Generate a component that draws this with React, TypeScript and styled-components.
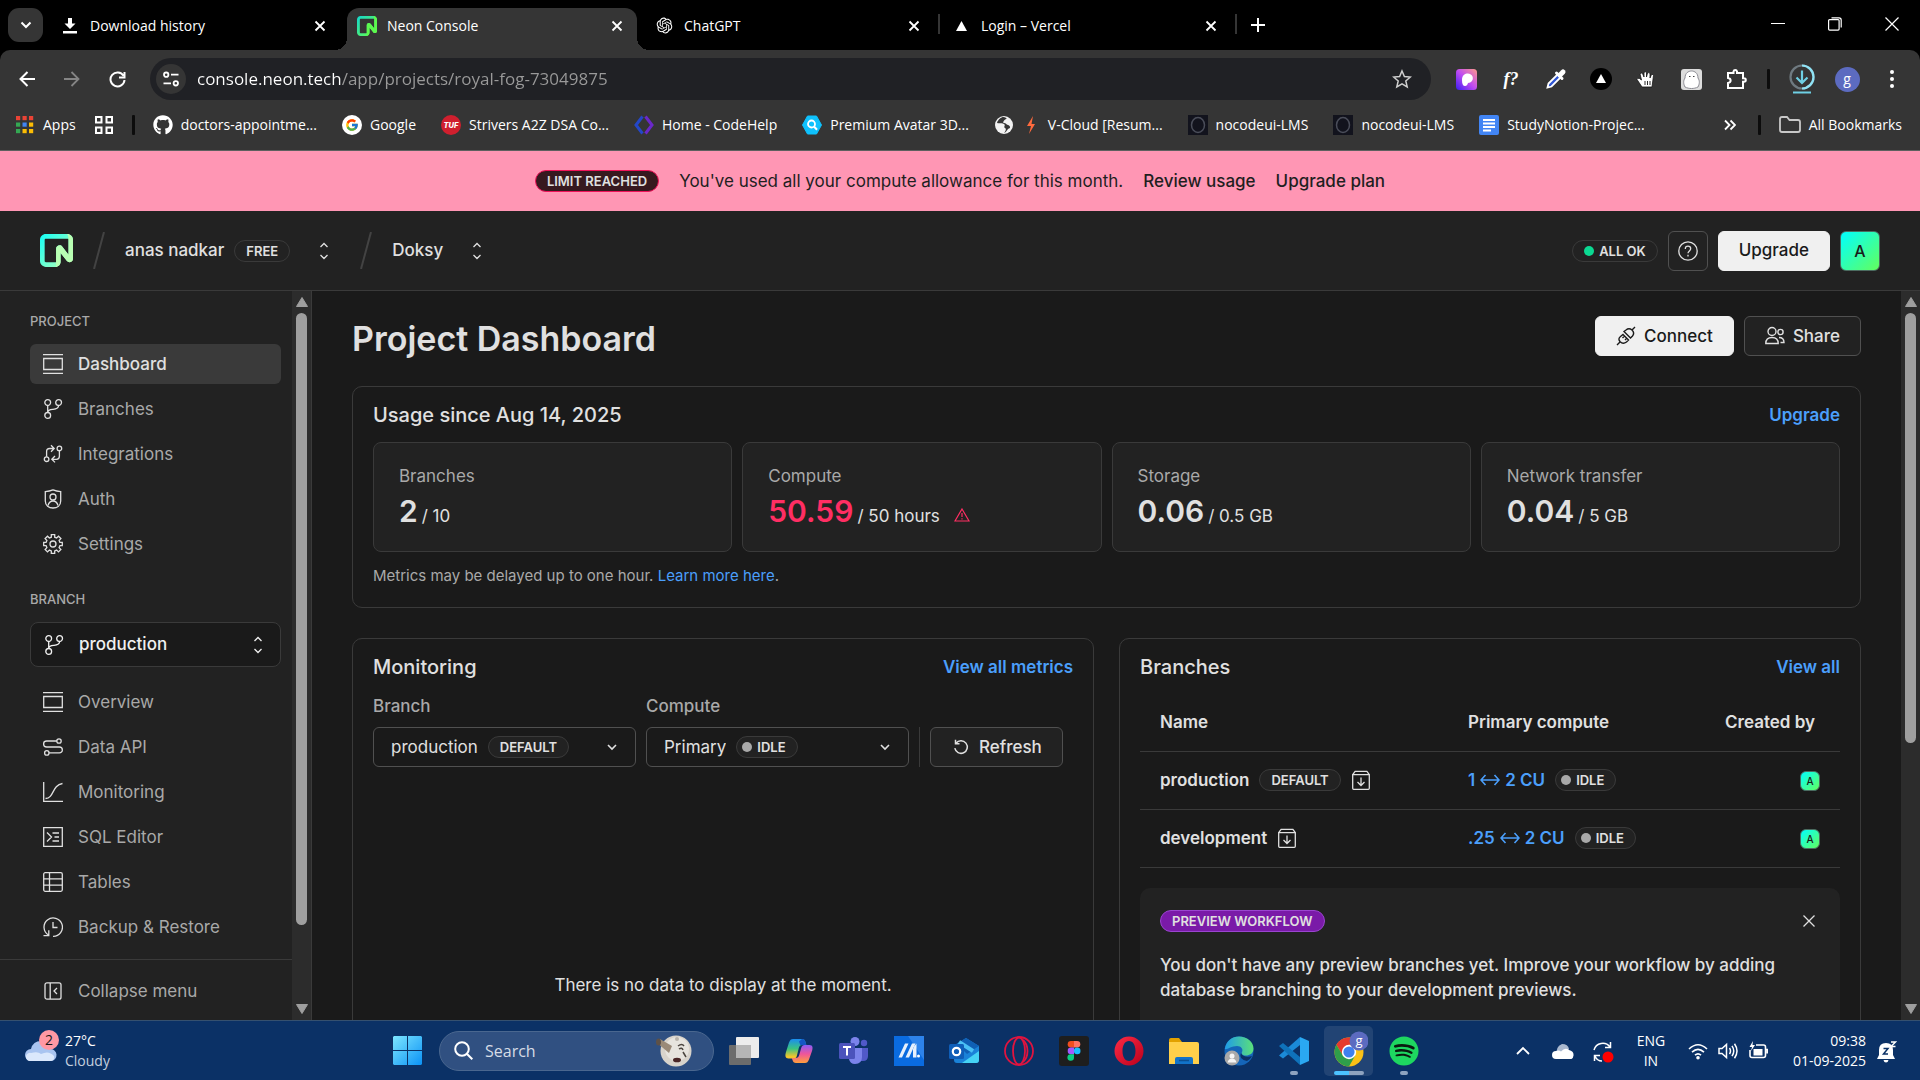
import React, { ReactNode } from "react";
import styled, { createGlobalStyle, css } from "styled-components";
import { FaGithub, FaSpotify } from "react-icons/fa";
import { FcGoogle } from "react-icons/fc";
import { RiOpenaiFill } from "react-icons/ri";

const ui = `"Open Sans", "Noto Sans", sans-serif`;
const c = {
  frame: "#353535",
  panel: "#222222",
  page: "#1a1a1a",
  line: "#3a3a3a",
  lineStrong: "#505050",
  text: "#e0e0e0",
  muted: "#a9a9a9",
  link: "#4b9ffb",
  danger: "#ff2e63",
};

const Global = createGlobalStyle`
  *, *::before, *::after { box-sizing: border-box; }
  body { margin: 0; background: #000; color: ${c.text}; font-family: Inter, sans-serif; font-size: 17px; line-height: 25px; overflow: hidden; }
  button, input, select { font: inherit; color: inherit; background: none; border: 0; padding: 0; margin: 0; }
  button { cursor: pointer; }
  a { color: inherit; text-decoration: none; }
  svg { display: block; flex: none; }
  h1, h2, p, ul { margin: 0; padding: 0; }
  ul { list-style: none; }
`;

const Screen = styled.div`
  height: 100vh;
  display: flex;
  flex-direction: column;
`;
const Spacer = styled.div`flex: 1;`;

/* ---------- Browser frame ---------- */

const TabStrip = styled.div`
  height: 50px;
  flex: none;
  display: flex;
  background: #000;
  font: 14px/20px ${ui};
  color: #fff;
`;
const TabSearch = styled.button`
  width: 35px;
  height: 34px;
  margin: 8px 7px 0 8px;
  border-radius: 11px;
  background: ${c.frame};
  display: grid;
  place-items: center;
`;
const Tab = styled.div<{ $active?: boolean; $divider?: boolean }>`
  position: relative;
  flex: 0 1 290px;
  margin: 8px 7px 0 0;
  padding: 0 10px 7px;
  display: flex;
  align-items: center;
  gap: 10px;
  border-radius: 12px 12px 0 0;
  background: ${(p) => (p.$active ? c.frame : "transparent")};
  ${(p) =>
    p.$active &&
    css`
      &::before,
      &::after {
        content: "";
        position: absolute;
        bottom: 0;
        width: 12px;
        height: 12px;
      }
      &::before {
        left: -12px;
        background: radial-gradient(circle at 0 0, transparent 12px, ${c.frame} 12px);
      }
      &::after {
        right: -12px;
        background: radial-gradient(circle at 100% 0, transparent 12px, ${c.frame} 12px);
      }
    `}
  ${(p) =>
    p.$divider &&
    css`
      &::after {
        content: "";
        position: absolute;
        right: -6px;
        top: 6px;
        width: 2px;
        height: 20px;
        background: ${c.frame};
      }
    `}
`;
const TabIcon = styled.span`
  width: 20px;
  display: grid;
  place-items: center;
`;
const TabTitle = styled.span`
  flex: 1;
  white-space: nowrap;
`;
const IconButton = styled.button<{ $size?: number }>`
  width: ${(p) => p.$size ?? 20}px;
  height: ${(p) => p.$size ?? 20}px;
  flex: none;
  display: grid;
  place-items: center;
`;
const NewTab = styled(IconButton)`margin: 15px 0 0 10px;`;
const WindowControls = styled.div`
  display: flex;
  padding: 0 0 2px;
`;
const WindowButton = styled.button`
  width: 57px;
  display: grid;
  place-items: center;
`;

const Toolbar = styled.div`
  height: 58px;
  flex: none;
  display: flex;
  align-items: center;
  padding: 0 13px 0 12px;
  background: ${c.frame};
  border-radius: 10px 10px 0 0;
  color: #fff;
`;
const NavButtons = styled.div`
  display: flex;
  gap: 15px;
  margin-right: 18px;
`;
const AddressBar = styled.div`
  flex: 1;
  height: 42px;
  border-radius: 21px;
  background: #202125;
  display: flex;
  align-items: center;
  gap: 11px;
  padding: 0 14px 0 6px;
`;
const SiteInfo = styled.button`
  width: 30px;
  height: 30px;
  border-radius: 50%;
  background: ${c.frame};
  display: grid;
  place-items: center;
`;
const Address = styled.input`
  flex: 1;
  min-width: 0;
  outline: 0;
  font: 17px/24px ${ui};
  -webkit-text-fill-color: transparent;
  background: linear-gradient(90deg, #fff 144px, #9a9a9a 144px);
  -webkit-background-clip: text;
  background-clip: text;
`;
const BarDivider = styled.span`
  width: 3px;
  height: 20px;
  border-radius: 1px;
  background: #0c0c0c;
  flex: none;
`;
const Extensions = styled.div`
  display: flex;
  align-items: center;
  gap: 15px;
  margin-left: 20px;
  ${BarDivider} { margin: 0 2px 0 1px; }
`;
const FnLabel = styled.span`font: italic 700 18px/20px "Liberation Serif", serif;`;
const ProfileDot = styled.span`
  width: 25px;
  height: 25px;
  border-radius: 50%;
  background: #5c6bc0;
  display: grid;
  place-items: center;
  font: 14px/14px ${ui};
  color: #fff;
`;

const Bookmarks = styled.nav`
  height: 43px;
  flex: none;
  display: flex;
  align-items: center;
  gap: 18px;
  padding: 0 18px 8px 15px;
  background: ${c.frame};
  border-bottom: 1px solid #5f5f5f;
  font: 14px/20px ${ui};
  color: #fff;
  white-space: nowrap;
`;
const BookmarkList = styled.div`
  display: flex;
  align-items: center;
  gap: 25px;
`;
const Bookmark = styled.a`
  display: flex;
  align-items: center;
  gap: 8px;
`;

/* ---------- Console ---------- */

const Banner = styled.div`
  height: 60px;
  flex: none;
  display: flex;
  align-items: center;
  justify-content: center;
  gap: 20px;
  background: #ff96b4;
  color: #1f1f1f;
`;
const StrongLink = styled.a`font-weight: 500;`;

type Tone = "plain" | "limit" | "preview";
const tones = {
  plain: css`background: #222; border-color: ${c.line};`,
  limit: css`background: #37191f; border-color: #f0125a;`,
  preview: css`background: #7a1aa8; border-color: #9a45d0;`,
};
const Pill = styled.span<{ $tone?: Tone }>`
  height: 22px;
  display: inline-flex;
  align-items: center;
  gap: 5px;
  flex: none;
  padding: 0 11px;
  border: 1px solid;
  border-radius: 11px;
  font-size: 13px;
  line-height: 20px;
  font-weight: 600;
  color: ${c.text};
  ${(p) => tones[p.$tone ?? "plain"]}
`;
const StatusPill = styled(Pill)`padding: 0 11px 0 5px;`;
const Dot = styled.i<{ $ok?: boolean }>`
  width: 10px;
  height: 10px;
  border-radius: 50%;
  background: ${(p) => (p.$ok ? "#0bd992" : "#a9a9a9")};
`;

const Header = styled.header`
  height: 80px;
  flex: none;
  display: flex;
  align-items: center;
  padding: 0 40px;
  background: ${c.panel};
  border-bottom: 1px solid ${c.line};
  font-weight: 500;
`;
const Crumb = styled.div`
  display: flex;
  align-items: center;
  gap: 10px;
  margin-right: 24px;
`;
const Switcher = styled(IconButton)`margin-right: 6px;`;
const HeaderSlash = styled.svg`margin: 0 20px;`;
const HeaderActions = styled.div`
  display: flex;
  align-items: center;
  gap: 10px;
`;
const Button = styled.button<{ $primary?: boolean; $icon?: boolean }>`
  height: 40px;
  ${(p) => (p.$icon ? "width: 40px; padding: 0;" : "padding: 0 20px;")}
  display: flex;
  align-items: center;
  justify-content: center;
  gap: 8px;
  flex: none;
  border-radius: 6px;
  font-weight: 500;
  border: 1px solid ${(p) => (p.$primary ? "#f0f0f0" : c.lineStrong)};
  background: ${(p) => (p.$primary ? "#f0f0f0" : c.panel)};
  color: ${(p) => (p.$primary ? "#1a1a1a" : c.text)};
`;
const Avatar = styled.span<{ $large?: boolean }>`
  width: ${(p) => (p.$large ? 40 : 20)}px;
  height: ${(p) => (p.$large ? 40 : 20)}px;
  border-radius: 6px;
  border: 1px solid #4b6b60;
  background: linear-gradient(135deg, #00ffff, #63ff5c);
  display: inline-grid;
  place-items: center;
  color: #1a1a1a;
  font-weight: 500;
  font-size: ${(p) => (p.$large ? 16 : 10)}px;
  line-height: 18px;
  vertical-align: middle;
`;

const Workspace = styled.div`
  flex: 1;
  min-height: 0;
  display: flex;
  background: ${c.page};
`;
const Sidebar = styled.aside`
  width: 312px;
  flex: none;
  display: flex;
  background: ${c.panel};
  border-right: 1px solid ${c.line};
`;
const SidebarBody = styled.div`
  flex: 1;
  display: flex;
  flex-direction: column;
`;
const Nav = styled.nav`
  flex: 1;
  padding: 20px 11px 0 30px;
`;
const NavHeading = styled.div`
  font-size: 13px;
  line-height: 20px;
  font-weight: 500;
  color: ${c.muted};
  margin-bottom: 13px;
`;
const NavList = styled.ul`
  display: flex;
  flex-direction: column;
  gap: 5px;
  margin-bottom: 25px;
  &:last-child { margin-bottom: 12px; }
`;
const NavLink = styled.a<{ $active?: boolean }>`
  height: 40px;
  display: flex;
  align-items: center;
  gap: 15px;
  padding-left: 13px;
  border-radius: 6px;
  background: ${(p) => (p.$active ? c.line : "transparent")};
  color: ${(p) => (p.$active ? c.text : c.muted)};
  font-weight: ${(p) => (p.$active ? 500 : 400)};
  svg { color: ${c.text}; }
`;
const BranchSelect = styled.label`
  height: 45px;
  display: flex;
  align-items: center;
  gap: 15px;
  padding: 0 17px 0 13px;
  margin-bottom: 15px;
  border: 1px solid ${c.line};
  border-radius: 8px;
  background: ${c.page};
  font-weight: 500;
  color: #f0f0f0;
`;
const Select = styled.select<{ $grow?: boolean }>`
  appearance: none;
  outline: 0;
  field-sizing: content;
  line-height: 25px;
  flex: ${(p) => (p.$grow ? 1 : "none")};
`;
const SidebarFoot = styled.div`
  height: 61px;
  flex: none;
  padding: 11px 11px 0 30px;
  border-top: 1px solid ${c.line};
`;

const Track = styled.div`
  width: 19px;
  flex: none;
  display: flex;
  flex-direction: column;
  align-items: center;
  background: #2c2c2c;
`;
const TrackArrow = styled.span<{ $down?: boolean }>`
  height: 22px;
  display: grid;
  place-items: center;
  transform: ${(p) => (p.$down ? "rotate(180deg)" : "none")};
`;
const Thumb = styled.div`
  width: 11px;
  border-radius: 6px;
  background: #9f9f9f;
`;

const Main = styled.main`
  flex: 1;
  min-width: 0;
  overflow: hidden;
  padding: 25px 40px 0;
`;
const TitleRow = styled.div`
  height: 40px;
  display: flex;
  align-items: flex-start;
  gap: 10px;
  margin-bottom: 30px;
`;
const Title = styled.h1`
  flex: 1;
  font-size: 34px;
  line-height: 46px;
  font-weight: 600;
`;
const Card = styled.section`
  padding: 16px 20px 20px;
  border: 1px solid ${c.line};
  border-radius: 10px;
`;
const CardHead = styled.div`
  display: flex;
  align-items: center;
  justify-content: space-between;
  height: 24px;
  margin-bottom: 15px;
`;
const CardTitle = styled.h2`
  font-size: 20px;
  line-height: 24px;
  font-weight: 500;
`;
const Link = styled.a<{ $light?: boolean }>`
  color: ${c.link};
  font-weight: ${(p) => (p.$light ? 400 : 600)};
`;
const Stats = styled.div`
  display: grid;
  grid-template-columns: repeat(4, 1fr);
  gap: 10px;
`;
const Stat = styled.div`
  height: 110px;
  padding: 21px 25px;
  border: 1px solid ${c.line};
  border-radius: 8px;
  background: ${c.panel};
`;
const StatLabel = styled.div`
  color: ${c.muted};
  margin-bottom: 4px;
`;
const StatValue = styled.div`
  display: flex;
  align-items: baseline;
  gap: 4px;
  line-height: 36px;
`;
const StatNumber = styled.strong<{ $over?: boolean }>`
  font-size: 30px;
  font-weight: 600;
  color: ${(p) => (p.$over ? c.danger : c.text)};
`;
const Warn = styled.svg`margin-left: 10px;`;
const Note = styled.p`
  margin: 14px 0 1px;
  font-size: 15px;
  line-height: 20px;
  color: ${c.muted};
`;
const Columns = styled.div`
  display: grid;
  grid-template-columns: 1fr 1fr;
  gap: 25px;
  margin-top: 30px;
  align-items: start;
`;
const Filters = styled.div`
  display: grid;
  grid-template-columns: 263px 263px 1px auto;
  justify-content: start;
  align-items: end;
  gap: 10px;
`;
const Field = styled.div`
  display: flex;
  flex-direction: column;
  gap: 8px;
`;
const FieldLabel = styled.label`
  color: ${c.muted};
  font-weight: 500;
`;
const SelectBox = styled.div`
  height: 40px;
  display: flex;
  align-items: center;
  gap: 10px;
  padding: 0 17px 0 17px;
  border: 1px solid ${c.lineStrong};
  border-radius: 6px;
`;
const FilterDivider = styled.span`
  height: 40px;
  background: ${c.line};
`;
const ChartEmpty = styled.div`
  height: 436px;
  display: grid;
  place-items: center;
`;
const Table = styled.table`
  width: 100%;
  table-layout: fixed;
  border-collapse: collapse;
  font-weight: 600;
  margin-bottom: 20px;
`;
const HeadCell = styled.th`
  height: 57px;
  padding: 0 25px 0 20px;
  text-align: left;
  font-weight: 600;
  border-bottom: 1px solid ${c.line};
  &:first-child { width: 44%; }
  &:last-child { width: 22%; text-align: right; }
`;
const Cell = styled.td`
  height: 58px;
  padding: 0 20px;
  border-bottom: 1px solid ${c.line};
  &:last-child { text-align: right; }
`;
const Inline = styled.div`
  display: flex;
  align-items: center;
  gap: 10px;
  white-space: nowrap;
`;
const Compute = styled.a`
  display: flex;
  align-items: center;
  gap: 5px;
  color: ${c.link};
  font-weight: 600;
`;
const Preview = styled.div`
  padding: 22px 20px 30px;
  min-height: 260px;
  border-radius: 10px;
  background: ${c.panel};
  font-weight: 500;
`;
const PreviewHead = styled.div`
  display: flex;
  justify-content: space-between;
  align-items: flex-start;
  height: 22px;
  margin-bottom: 21px;
`;

/* ---------- Taskbar ---------- */

const Taskbar = styled.footer`
  height: 60px;
  flex: none;
  display: grid;
  grid-template-columns: 380px 1fr auto;
  align-items: center;
  background: #0b3166;
  border-top: 1px solid #35506f;
  font: 14px/20px ${ui};
  color: #fff;
`;
const Weather = styled.button`
  display: flex;
  align-items: center;
  gap: 6px;
  padding-left: 25px;
  text-align: left;
`;
const Faint = styled.span`color: #c4cfde;`;
const Stack = styled.span`
  display: flex;
  flex-direction: column;
`;
const TaskIcons = styled.div`
  display: flex;
  align-items: center;
`;
const TaskIcon = styled.button<{ $active?: boolean; $open?: boolean }>`
  position: relative;
  width: 49px;
  height: 50px;
  margin: 0 3px;
  border-radius: 5px;
  display: grid;
  place-items: center;
  background: ${(p) => (p.$active ? "#224474" : "none")};
  ${(p) =>
    p.$open &&
    css`
      &::after {
        content: "";
        position: absolute;
        bottom: 1px;
        left: 50%;
        margin-left: ${p.$active ? -15 : -4}px;
        width: ${p.$active ? 30 : 8}px;
        height: 4px;
        border-radius: 2px;
        background: ${p.$active ? "linear-gradient(90deg, #4cc2ff 50%, #8fa3bf 50%)" : "#8fa3bf"};
      }
    `}
`;
const SearchBox = styled.label`
  width: 275px;
  height: 40px;
  margin: 0 2px 0 4px;
  display: flex;
  align-items: center;
  gap: 12px;
  padding: 0 20px 0 14px;
  border: 1px solid #4a678f;
  border-radius: 20px;
  background: #305081;
`;
const SearchInput = styled.input`
  flex: 1;
  min-width: 0;
  outline: 0;
  font-size: 16px;
  &::placeholder { color: #d5dce6; opacity: 1; }
`;
const Tray = styled.div`
  display: flex;
  align-items: center;
  padding-right: 23px;
`;
const TrayIcon = styled(IconButton)`
  width: 30px;
  margin-right: 10px;
`;
const Language = styled.button`
  width: 40px;
  margin: 0 17px 0 3px;
  text-align: center;
  line-height: 20px;
`;
const TrayStatus = styled.button`
  display: flex;
  gap: 10px;
  margin-right: 25px;
`;
const Clock = styled.button`
  text-align: right;
  margin-right: 11px;
`;

/* ---------- Icons ---------- */

type IconProps = { w?: number; h?: number; box?: string; sw?: number; children: ReactNode };
const Line = ({ w = 20, h, box = "0 0 20 20", sw = 1.3, children }: IconProps) => (
  <svg width={w} height={h ?? w} viewBox={box} fill="none" stroke="currentColor" strokeWidth={sw} aria-hidden="true">
    {children}
  </svg>
);
const CloseIcon = () => <Line w={12} box="0 0 12 12" sw={1.8}><path d="M1.5 1.5l9 9M10.5 1.5l-9 9" /></Line>;
const ChevronDown = () => <Line w={12} box="0 0 12 12" sw={1.6}><path d="M2 4l4 4 4-4" /></Line>;
const UpDown = () => <Line w={10} h={18} box="0 0 10 18" sw={1.3}><path d="M1.500 5L5 1.500 8.500 5M1.500 13L5 16.500 8.500 13" /></Line>;
const NeonMark = ({ size = 33, flat = false }) => {
  const id = flat ? "neonTab" : "neonHead";
  return (
    <svg width={size} height={size} viewBox="0 0 64 64" aria-hidden="true">
      <defs>
        <linearGradient id={id} x1="0" y1="0" x2="1" y2="0.9">
          <stop offset="0" stopColor={flat ? "#12d6d0" : "#12fff7"} />
          <stop offset="1" stopColor={flat ? "#6dff3f" : "#b9ffb3"} />
        </linearGradient>
      </defs>
      <path fillRule="evenodd" fill={`url(#${id})`} d="M0 11.3C0 5.06 5.06 0 11.3 0h41.4C58.94 0 64 5.06 64 11.3v36.6c0 6.46-8.17 9.26-12.13 4.16L39.92 36.68V53.7c0 5.62-4.56 10.18-10.18 10.18H11.3C5.06 63.88 0 58.8 0 52.6zM11.3 9.04c-1.25 0-2.26 1.01-2.26 2.25v41.3c0 1.26 1.01 2.27 2.25 2.27h19.17c.62 0 .79-.5.79-1.13V28.8c0-6.46 8.17-9.26 12.13-4.16l11.95 15.38V11.3c0-1.25.12-2.26-1.13-2.26z" />
      <path fill={flat ? "#5cf94e" : "#b9ffb3"} d="M64 11.3v36.6c0 6.46-8.17 9.26-12.13 4.16L39.92 36.68V53.7c0 5.62-4.56 10.18-10.18 10.18.8 0 1.5-.5 1.5-1.3V28.8c0-6.46 8.17-9.26 12.13-4.16l11.95 15.38V11.3C55.3 5 54 2 52.7 0 58.94 0 64 5.06 64 11.3z" />
    </svg>
  );
};

const icons = {
  dashboard: <Line><path d="M0 .7h20M0 19.3h20M.7 4.5h18.6v11H.7z" /></Line>,
  branches: <Line><circle cx="4.7" cy="3.6" r="2.9" /><circle cx="15.6" cy="3.6" r="2.9" /><circle cx="4.7" cy="16.4" r="2.9" /><path d="M4.7 6.5v7M15.6 6.5c0 3.5-3 3.6-6 3.9-2.5.2-4.6.8-4.9 3" /></Line>,
  integrations: <Line><circle cx="3.6" cy="15.2" r="2.3" /><circle cx="16.4" cy="4.4" r="2.3" /><path d="M3.6 12.800V7.500q0-3 3-3H11M8 1.300l3.200 3.200L8 7.700M16.400 6.800v5.500q0 3-3 3H9M12 12l-3.200 3.200L12 18.400" /></Line>,
  auth: <Line><path d="M10 .9c2.500 1 5 1.500 7.700 1.700v9.400c0 4.500-3.500 7-7.700 7s-7.700-2.500-7.700-7V2.600C5 2.400 7.500 1.900 10 .9z" /><circle cx="10" cy="8" r="3" /><path d="M5 16.500c1-3.500 2.300-4.500 5-4.500s4 1 5 4.500" /></Line>,
  settings: <Line><circle cx="10" cy="10" r="3" /><path d="M8.300.7h3.400v2.500l1.900.8 1.900-1.800 2.400 2.400-1.800 1.900.8 1.900h2.400v3.300h-2.400l-.8 1.900 1.800 1.900-2.400 2.400-1.900-1.800-1.900.8v2.400H8.300v-2.400l-1.900-.8-1.900 1.800-2.400-2.400 1.800-1.900-.8-1.900H.7V8.400h2.400l.8-1.900-1.800-1.900 2.400-2.400L6.400 4l1.900-.8z" /></Line>,
  api: <Line><circle cx="16" cy="4" r="2.200" /><circle cx="3.800" cy="15.900" r="2.200" /><path d="M13.800 4H3.600a3 3 0 000 6h12.800a2.950 2.950 0 010 5.900H6" /></Line>,
  monitoring: <Line><path d="M.7 0v19.300H20M2.500 16.500c9-.5 6-13 17-15" /></Line>,
  sql: <Line><path d="M.7.7h18.600v18.600H.7zM4 5.500l4.500 4.500L4 14.500M9.500 6h6.500M11.500 10H16M9.500 14H16" /></Line>,
  tables: <Line><rect x=".7" y=".7" width="18.600" height="18.600" rx="1.500" /><path d="M.7 6.800h18.600M.7 13.200h18.600M6.500.7v18.600" /></Line>,
  backup: <Line><path d="M5.500 18A9.200 9.200 0 1110 19.300M10 5v5.500h4.500M.5 18.600h5.300v-5.300" /></Line>,
  collapse: <Line><rect x="2" y="1.800" width="16" height="16.400" rx="2" /><path d="M7.200 2v16M14 7l-3 3 3 3" /></Line>,
  archive: <Line><path d="M1.700 4.600h16.600v13.700q0 1-1 1H2.700q-1 0-1-1zM1.700 4.600l2.400-3.300h11.800l2.400 3.300M10 7.500v8M6.500 12l3.500 3.500L13.500 12" /></Line>,
};

const NocodeIcon = () => (
  <svg width="20" height="20" viewBox="0 0 20 20"><rect width="20" height="20" fill="#12131d" /><ellipse cx="10" cy="10" rx="6.500" ry="7.500" fill="none" stroke="#4a4d59" strokeWidth="1.500" /></svg>
);

const bookmarks: [string, ReactNode][] = [
  ["doctors-appointme...", <FaGithub size={20} />],
  ["Google", <svg width="20" height="20" viewBox="0 0 20 20"><circle cx="10" cy="10" r="10" fill="#fff" /><g transform="translate(3 3)"><FcGoogle size={14} /></g></svg>],
  ["Strivers A2Z DSA Co...", <svg width="20" height="20" viewBox="0 0 20 20"><circle cx="10" cy="10" r="10" fill="#d01f2e" /><text x="10" y="12.700" textAnchor="middle" fontFamily="Inter" fontWeight="800" fontStyle="italic" fontSize="7.500" fill="#fff">TUF</text></svg>],
  ["Home - CodeHelp", <svg width="20" height="20" viewBox="0 0 20 20" fill="none" strokeWidth="3"><path stroke="#2447c8" d="M8.500 1.500L2 10l6.500 8.500" /><path stroke="#6a28c9" d="M11.500 1.500L18 10l-6.500 8.500" /></svg>],
  ["Premium Avatar 3D...", <svg width="20" height="20" viewBox="0 0 20 20"><path d="M5.500 1h9L19.500 10l-5 9h-9L.5 10z" fill="#0fc1fc" stroke="#0fc1fc" strokeLinejoin="round" /><circle cx="9.500" cy="9" r="3.500" fill="none" stroke="#fff" strokeWidth="1.800" /><path d="M12 11.500l3 3.200" stroke="#fff" strokeWidth="2" /></svg>],
  ["V-Cloud [Resum...", <><svg width="20" height="20" viewBox="0 0 20 20"><circle cx="10" cy="10" r="9" fill="#f2f2f2" /><path d="M3 8c3 1 5-.5 7 1s-1 3 1 4 0 4-1 5c3-1 3-4 5-4.500s1-3-1-3.500-2-2-4-2 0-3 2-4-2-2-3-2-5 2-6 6z" fill="#353535" /></svg><svg width="18" height="20" viewBox="0 0 18 20"><path d="M11 1L5 11h4l-2 8 6-10H9.500z" fill="#ff6a3d" /></svg></>],
  ["nocodeui-LMS", <NocodeIcon />],
  ["nocodeui-LMS", <NocodeIcon />],
  ["StudyNotion-Projec...", <svg width="20" height="20" viewBox="0 0 20 20"><rect width="20" height="20" rx="2" fill="#4285f4" /><path d="M4 5h12M4 8.500h12M4 12h12M4 15.500h8" stroke="#fff" strokeWidth="1.800" /></svg>],
];

const extensions: [string, ReactNode][] = [
  ["Pixel Perfect", <svg width="21" height="21" viewBox="0 0 21 21"><defs><linearGradient id="pp" x1="0" y1="1" x2="1" y2="0"><stop offset="0" stopColor="#3a1cf0" /><stop offset=".5" stopColor="#c04bf2" /><stop offset="1" stopColor="#ff9a8a" /></linearGradient></defs><rect width="21" height="21" rx="3.500" fill="url(#pp)" /><path d="M6 11c0-5 3-6.500 6-6.500 6 0 7 9 0 9.500-.5 2-1.500 3-3 3-2 0-3-2-3-6z" fill="#fff" /></svg>],
  ["Font finder", <FnLabel>f?</FnLabel>],
  ["Color picker", <svg width="22" height="22" viewBox="0 0 22 22"><path d="M2.500 19.500l1-4 9-9 3 3-9 9z" fill="#2f55d4" stroke="#fff" strokeWidth="1.800" /><path d="M11.500 5l5.500 5.500" stroke="#fff" strokeWidth="3" strokeLinecap="round" /><path d="M15 7l3-3" stroke="#fff" strokeWidth="5" strokeLinecap="round" /></svg>],
  ["Vercel", <svg width="22" height="22" viewBox="0 0 22 22"><circle cx="11" cy="11" r="11" fill="#000" /><path d="M11 6l5 9H6z" fill="#fff" /></svg>],
  ["Hand", <svg width="22" height="22" viewBox="0 0 22 22"><path d="M7 19l-5-7.500q.5-2 2.500-1L6.500 12 5 6q1-1.800 2.500-.5L9 9V4.500q1.200-1.500 2.500 0V9l1-4q1.500-1 2.500.5V10l1.500-3.500q1.700-.5 2 1L17 19z" fill="#fff" stroke="#151515" strokeWidth=".8" /><path d="M10 13v4M12.500 13v4M15 13v4" stroke="#151515" strokeWidth=".9" /></svg>],
  ["Ghost", <svg width="21" height="21" viewBox="0 0 21 21"><rect width="21" height="21" rx="3" fill="#dcdcdc" /><path d="M4 18c-1.500-3-2-6 0-9 0-5 3.500-7 6.500-7s6.500 2 6.500 7c2 3 1.500 6 0 9-4 2-9 2-13 0z" fill="#fff" stroke="#8b8b93" /><path d="M8 7.500h1.500M12 7.500h1.500" stroke="#444" /></svg>],
  ["Extensions", <Line w={22} box="0 0 22 22" sw={2}><path d="M3 5h5.500V3.500a1.800 1.800 0 013.500 0V5h6v5.200h1a1.800 1.800 0 010 3.600h-1V20H3v-5c3.500-.5 3.500-4.500 0-5z" /></Line>],
];

const taskApps: { name: string; icon: ReactNode; open?: boolean; active?: boolean }[] = [
  { name: "Task view", icon: <svg width="30" height="30" viewBox="0 0 30 30"><rect x="7" y="1" width="23" height="21" rx="1" fill="#ececec" /><rect x="0" y="9" width="22" height="20" rx="1" fill="#6c6c6c" /><path d="M7 9h15v13H7z" fill="#b5b5b5" /></svg> },
  { name: "Copilot", icon: <svg width="30" height="30" viewBox="0 0 30 30"><defs><linearGradient id="co1" x1="0" y1="0" x2="0" y2="1"><stop offset="0" stopColor="#1a8df0" /><stop offset=".5" stopColor="#3bc480" /><stop offset=".9" stopColor="#f2c52c" /></linearGradient><linearGradient id="co2" x1="0" y1="0" x2="0" y2="1"><stop offset="0" stopColor="#8b5cf6" /><stop offset=".5" stopColor="#f0559a" /><stop offset="1" stopColor="#ffa03c" /></linearGradient></defs><path d="M9 3h9c2 0 3 1 3.500 3l.8 3h-4c-2 0-3 1-3.500 3l-2 8c-.6 2-1.500 2.500-3.500 2.500H4.500C1 22.500 1 19 2 16L5 6.500C6 4 7 3 9 3z" fill="url(#co1)" /><path d="M18 3c2 0 3 1 3.500 3l.8 3h-6L15 5.500z" fill="#1556c4" /><path d="M21 27h-9c-2 0-3-1-3.500-3l-.8-2h4c2 0 3-1 3.500-3l2-7c.6-2 1.500-3 3.500-3H25.500C29 9 29 12 28 15l-3 8.500C24 26 23 27 21 27z" fill="url(#co2)" /></svg> },
  { name: "Teams", icon: <svg width="30" height="30" viewBox="0 0 30 30"><circle cx="16" cy="5.500" r="4.500" fill="#7b83eb" /><circle cx="25" cy="7" r="3.200" fill="#5059c9" /><path d="M21 12h8v8q0 5-5 5h-3z" fill="#5059c9" /><path d="M10 12h13v9q0 7-7 7-5 0-6-5z" fill="#7b83eb" /><rect x="0" y="7" width="16" height="16" rx="1.500" fill="#4b53bc" /><path d="M4 11h8M8 11v8.500" stroke="#fff" strokeWidth="2" /></svg> },
  { name: "MyASUS", icon: <svg width="30" height="30" viewBox="0 0 30 30"><rect width="30" height="30" fill="#0a6be0" /><path d="M14 0h16v24z" fill="#3c8df0" opacity=".7" /><path d="M4.500 21.500l3.500 0 6.500-14h-3.500zM11.500 21.500h3.500l6.500-14H18zM19 12l3.500-4.500v14H19z" fill="#fff" opacity=".9" /><circle cx="24.500" cy="20" r="1.500" fill="#fff" /></svg> },
  { name: "Outlook", icon: <svg width="30" height="30" viewBox="0 0 30 30"><path d="M4 10L17 2l13 8v14q0 3-3 3H8q-3 0-3-3z" fill="#1a82d8" /><path d="M17 2l13 8-12 8L8 8z" fill="#0f5fb5" /><path d="M13 27l17-12v9q0 3-3 3z" fill="#45d3f5" /><path d="M10 6l14 9" stroke="#4ac0f5" strokeWidth="4" /><rect x="0" y="8" width="15" height="15" rx="1.500" fill="#0f5eb8" /><circle cx="7.500" cy="15.500" r="3.700" fill="none" stroke="#fff" strokeWidth="2.200" /></svg> },
  { name: "Opera GX", icon: <svg width="30" height="30" viewBox="0 0 30 30" fill="none" stroke="#e0143f" strokeWidth="1.800"><circle cx="15" cy="15" r="14" /><ellipse cx="15" cy="15" rx="6" ry="13.500" /><path d="M19 4c6 5 6 17 0 22" /></svg> },
  { name: "Figma", icon: <svg width="30" height="30" viewBox="0 0 30 30"><rect width="30" height="30" rx="3" fill="#1e1e1e" /><path d="M15 5h-3a3.300 3.300 0 000 6.600h3z" fill="#f24e1e" /><path d="M15 5h3a3.300 3.300 0 010 6.600h-3z" fill="#ff7262" /><path d="M15 11.600h-3a3.300 3.300 0 000 6.600h3z" fill="#a259ff" /><circle cx="18.200" cy="14.900" r="3.300" fill="#1abcfe" /><path d="M15 18.200h-3a3.300 3.300 0 103 3.300z" fill="#0acf83" /></svg> },
  { name: "Opera", icon: <svg width="30" height="30" viewBox="0 0 30 30"><defs><linearGradient id="op" x1="0" x2="1" y1="0" y2="1"><stop offset="0" stopColor="#ff2b45" /><stop offset="1" stopColor="#b8001c" /></linearGradient></defs><path fillRule="evenodd" fill="url(#op)" d="M15 .5a14.500 14.500 0 100 29 14.500 14.500 0 000-29zM15 5c4 0 6.500 4 6.500 10S19 25 15 25s-6.500-4-6.500-10S11 5 15 5z" /></svg> },
  { name: "File Explorer", icon: <svg width="30" height="28" viewBox="0 0 30 28"><path d="M0 3q0-2 2-2h8l3 4h-13z" fill="#e2a100" /><path d="M0 5h28q2 0 2 2v20H0z" fill="#ffd04a" /><path d="M6 27v-5q0-2 2-2h14q2 0 2 2v5z" fill="#1273c9" /><path d="M10 23.500h10" stroke="#0b4f92" strokeWidth="1.500" /></svg> },
  { name: "Edge", icon: <svg width="30" height="30" viewBox="0 0 30 30"><defs><linearGradient id="ed" x1="0" x2="1" y1="0" y2="0"><stop offset="0" stopColor="#1f9be8" /><stop offset="1" stopColor="#5be07a" /></linearGradient></defs><circle cx="15" cy="15" r="14.500" fill="#1565b8" /><path d="M.8 13C2 5 8 .5 15 .5c8 0 14.500 5 14.500 12 0 5-4 7-7.500 7s-5-1.500-4-3.500c1.500-3-1-6-5-6C7 10 3 14 .8 13z" fill="url(#ed)" /><path d="M17 17c1 3 6 5 11 3-1 2-3 4-5 5-5-1-8-4-6-8z" fill="#0b3166" /><circle cx="8" cy="22" r="7.500" fill="#a9a9a9" /><circle cx="8" cy="20" r="2.500" fill="#f5f5f5" /><path d="M3.500 26.500q1-4 4.500-4t4.500 4z" fill="#f5f5f5" /></svg> },
  { name: "Visual Studio Code", open: true, icon: <svg width="30" height="30" viewBox="0 0 30 30"><path d="M21 1l9 4v20l-9 4z" fill="#2aa8f2" /><path d="M21 1v8L4 22.500 0 19.500z" fill="#1b8ad8" /><path d="M0 10l4-3 17 14v8z" fill="#0f72ba" /></svg> },
  { name: "Google Chrome", open: true, active: true, icon: <svg width="38" height="40" viewBox="0 0 38 40"><circle cx="19" cy="21" r="14.500" fill="#fbc116" /><path d="M6.400 13.800A14.500 14.500 0 0131.600 13.800H19l-6.200 10.800z" fill="#e53a2e" /><path d="M6.400 13.800A14.500 14.500 0 0019 35.500l6.200-10.900-12.400 0z" fill="#2f9e4a" /><circle cx="19" cy="21" r="7.200" fill="#fff" /><circle cx="19" cy="21" r="5.600" fill="#3f80ee" /><circle cx="29" cy="10" r="9.500" fill="#5c6bc0" /><text x="29" y="13.500" fontSize="13" textAnchor="middle" fill="#fff" fontFamily="Open Sans">g</text></svg> },
  { name: "Spotify", open: true, icon: <svg width="30" height="30" viewBox="0 0 30 30"><circle cx="15" cy="15" r="13" fill="#0b1a10" /><g color="#1ed760"><FaSpotify size={30} /></g></svg> },
];

const StartIcon = () => (
  <svg width="29" height="29" viewBox="0 0 29 29">
    <defs><linearGradient id="win" x1="0" y1="0" x2="1" y2="1"><stop offset="0" stopColor="#7de6ff" /><stop offset="1" stopColor="#0b92f5" /></linearGradient></defs>
    <path fill="url(#win)" d="M1 0h13v14H0V1zM15 0h13l1 1v13H15zM0 15h14v14H1l-1-1zM15 15h14v13l-1 1H15z" />
  </svg>
);
const MoonIcon = () => (
  <svg width="38" height="32" viewBox="0 0 38 32">
    <circle cx="21" cy="16" r="15.500" fill="#d8d3cb" /><circle cx="22" cy="14" r="12" fill="#eeebe5" opacity=".7" />
    <path d="M1 7l4-3 12 7-3 7z" fill="#9a8a78" /><ellipse cx="3.500" cy="7" rx="2.500" ry="3.500" fill="#5d5148" />
    <path d="M23 11q4-3 6 0M24 14q3-2 4 1M28 17l3 5" stroke="#4b453f" strokeWidth="1.500" fill="none" /><ellipse cx="22" cy="25" rx="4" ry="2.300" fill="#4a2626" /><circle cx="22" cy="4" r="2" fill="#b9b3aa" />
  </svg>
);
const WeatherIcon = () => (
  <svg width="34" height="42" viewBox="0 0 34 42">
    <path d="M6 31a6 6 0 010-12q2-8 10-8t9 8a6 6 0 011 12z" fill="#a9c4f0" /><path d="M4 31a4 4 0 012-8q7-2 10 1 8-4 13 2 1 5-4 5z" fill="#dbe8fc" />
    <circle cx="24" cy="10" r="10" fill="#ff98a4" /><text x="24" y="15" textAnchor="middle" fontFamily="Open Sans" fontSize="14" fill="#1a1a1a">2</text>
  </svg>
);

/* ---------- Sections ---------- */

const BrowserTab = ({ title, icon, active, divider }: { title: string; icon: ReactNode; active?: boolean; divider?: boolean }) => (
  <Tab $active={active} $divider={divider}>
    <TabIcon>{icon}</TabIcon>
    <TabTitle>{title}</TabTitle>
    <IconButton aria-label={`Close ${title}`}><CloseIcon /></IconButton>
  </Tab>
);

const Browser = () => (
  <>
    <TabStrip>
      <TabSearch aria-label="Search tabs"><Line w={12} box="0 0 12 12" sw={2}><path d="M1.500 3.500L6 8l4.500-4.500" /></Line></TabSearch>
      <BrowserTab title="Download history" icon={<svg width="14" height="16" viewBox="0 0 14 16"><path d="M5 0h4v5.500h3.500L7 11 1.500 5.500H5zM0 13h14v2.500H0z" fill="#fff" /></svg>} />
      <BrowserTab active title="Neon Console" icon={<NeonMark size={20} flat />} />
      <BrowserTab divider title="ChatGPT" icon={<RiOpenaiFill size={19} />} />
      <BrowserTab divider title="Login – Vercel" icon={<svg width="11" height="10" viewBox="0 0 11 10"><path d="M5.500 0L11 10H0z" fill="#fff" /></svg>} />
      <NewTab aria-label="New tab"><Line w={14} box="0 0 14 14" sw={2}><path d="M7 0v14M0 7h14" /></Line></NewTab>
      <Spacer />
      <WindowControls>
        <WindowButton aria-label="Minimize"><Line w={14} box="0 0 14 14" sw={1}><path d="M0 6.500h14" /></Line></WindowButton>
        <WindowButton aria-label="Restore"><Line w={14} box="0 0 14 14" sw={1.200}><rect x=".6" y="2.600" width="10.500" height="10.500" rx="1" /><path d="M3.500.8H11q2.200 0 2.200 2.200v7.500" /></Line></WindowButton>
        <WindowButton aria-label="Close window"><Line w={14} box="0 0 14 14" sw={1.200}><path d="M.5.500l13 13M13.500.500l-13 13" /></Line></WindowButton>
      </WindowControls>
    </TabStrip>
    <Toolbar>
      <NavButtons>
        <IconButton $size={30} aria-label="Back"><Line w={16} box="0 0 16 16" sw={2}><path d="M16 8H2M8.500 1L1.500 8l7 7" /></Line></IconButton>
        <IconButton $size={30} aria-label="Forward" disabled><svg width="16" height="16" viewBox="0 0 16 16" fill="none" stroke="#858585" strokeWidth="1.800"><path d="M0 8h14M7.500 1l7 7-7 7" /></svg></IconButton>
        <IconButton $size={30} aria-label="Reload"><Line w={17} box="0 0 17 17" sw={2}><path d="M14.500 4.800A7 7 0 1015.500 9M15.500 1v5.500H10" /></Line></IconButton>
      </NavButtons>
      <AddressBar>
        <SiteInfo aria-label="Site information"><Line w={16} box="0 0 16 16" sw={1.800}><circle cx="3.200" cy="3.700" r="2.200" /><path d="M8 3.700h7.500M.5 12.300H8" /><circle cx="12.800" cy="12.300" r="2.200" /></Line></SiteInfo>
        <Address aria-label="Address" defaultValue="console.neon.tech/app/projects/royal-fog-73049875" />
        <IconButton $size={30} aria-label="Bookmark this page"><Line w={20} sw={1.500}><path stroke="#cfcfcf" d="M10 2l2.400 5.500 6 .5-4.600 4 1.400 5.900L10 14.800 4.800 17.900 6.200 12l-4.600-4 6-.5z" /></Line></IconButton>
      </AddressBar>
      <Extensions>
        {extensions.map(([name, icon]) => <IconButton $size={30} key={name} aria-label={name}>{icon}</IconButton>)}
        <BarDivider />
        <IconButton $size={30} aria-label="Downloads">
          <svg width="26" height="30" viewBox="0 0 26 30" fill="none" strokeWidth="2.200"><circle cx="13" cy="13" r="11.500" stroke="#6f7a80" /><path d="M13 1.500a11.500 11.500 0 010 23" stroke="#8fe3f5" /><path d="M13 6.500v12M7.500 13.500l5.500 5.500 5.500-5.500M4 28.500h18" stroke="#6fd0e4" /></svg>
        </IconButton>
        <IconButton $size={30} aria-label="Profile"><ProfileDot>g</ProfileDot></IconButton>
        <IconButton $size={30} aria-label="Menu"><svg width="4" height="18" viewBox="0 0 4 18" fill="#fff"><circle cx="2" cy="2" r="2" /><circle cx="2" cy="9" r="2" /><circle cx="2" cy="16" r="2" /></svg></IconButton>
      </Extensions>
    </Toolbar>
    <Bookmarks aria-label="Bookmarks">
      <Bookmark href="#"><svg width="20" height="18" viewBox="0 0 20 18">{["#ea4335", "#ea4335", "#ea4335", "#34a853", "#4285f4", "#fbbc04", "#34a853", "#fbbc04", "#fbbc04"].map((f, i) => <rect key={i} x={1 + (i % 3) * 6.500} y={Math.floor(i / 3) * 6.500} width="4.200" height="4.200" fill={f} />)}</svg>Apps</Bookmark>
      <IconButton aria-label="Tab groups"><Line w={18} box="0 0 18 18" sw={2}><path d="M1 1h5.500v5.500H1zM11.500 1H17v5.500h-5.500zM1 11.500h5.500V17H1zM11.500 11.500H17V17h-5.500z" /></Line></IconButton>
      <BarDivider />
      <BookmarkList>
        {bookmarks.map(([name, icon], i) => <Bookmark href="#" key={i}>{icon}{name}</Bookmark>)}
      </BookmarkList>
      <Spacer />
      <IconButton aria-label="More bookmarks"><Line w={12} box="0 0 12 12" sw={1.800}><path d="M1 1.500L5.500 6 1 10.500M6.500 1.500L11 6l-4.500 4.500" /></Line></IconButton>
      <BarDivider />
      <Bookmark href="#"><Line w={22} h={18} box="0 0 22 18" sw={1.800}><path d="M1 3q0-2 2-2h5l2.500 3H19q2 0 2 2v8q0 2-2 2H3q-2 0-2-2z" stroke="#c8c8c8" /></Line>All Bookmarks</Bookmark>
    </Bookmarks>
  </>
);

const Slash = () => (
  <HeaderSlash width="12" height="37" viewBox="0 0 12 37" aria-hidden="true"><path d="M11 0L1 37" stroke="#434343" strokeWidth="2" /></HeaderSlash>
);

const ConsoleHeader = () => (
  <Header>
    <a href="#" aria-label="Neon"><NeonMark /></a>
    <Slash />
    <Crumb><a href="#">anas nadkar</a><Pill>FREE</Pill></Crumb>
    <Switcher aria-label="Switch organization"><UpDown /></Switcher>
    <Slash />
    <Crumb><a href="#">Doksy</a></Crumb>
    <Switcher aria-label="Switch project"><UpDown /></Switcher>
    <Spacer />
    <HeaderActions>
      <Pill><Dot $ok />ALL OK</Pill>
      <Button $icon aria-label="Help"><Line sw={1.300}><circle cx="10" cy="10" r="9.200" /><path d="M7.300 8q0-2.800 2.700-2.800T12.700 7.800C12.700 9.800 10 10 10 12.200M10 13.800v1.600" /></Line></Button>
      <Button $primary>Upgrade</Button>
      <Avatar $large>A</Avatar>
    </HeaderActions>
  </Header>
);

const ScrollTrack = ({ share }: { share: number }) => (
  <Track aria-hidden="true">
    <TrackArrow><svg width="12" height="10" viewBox="0 0 12 10"><path d="M6 .5L11.500 9.500H.5z" fill="#9f9f9f" stroke="#9f9f9f" strokeLinejoin="round" /></svg></TrackArrow>
    <Thumb style={{ height: `${share}%` }} />
    <Spacer />
    <TrackArrow $down><svg width="12" height="10" viewBox="0 0 12 10"><path d="M6 .5L11.500 9.500H.5z" fill="#9f9f9f" stroke="#9f9f9f" strokeLinejoin="round" /></svg></TrackArrow>
  </Track>
);

const NavItems = ({ items }: { items: [string, ReactNode, boolean?][] }) => (
  <NavList>
    {items.map(([name, icon, active]) => (
      <li key={name}><NavLink href="#" $active={active}>{icon}{name}</NavLink></li>
    ))}
  </NavList>
);

const SidePanel = () => (
  <Sidebar>
    <SidebarBody>
      <Nav>
        <NavHeading>PROJECT</NavHeading>
        <NavItems items={[["Dashboard", icons.dashboard, true], ["Branches", icons.branches], ["Integrations", icons.integrations], ["Auth", icons.auth], ["Settings", icons.settings]]} />
        <NavHeading>BRANCH</NavHeading>
        <BranchSelect>
          {icons.branches}
          <Select $grow aria-label="Branch"><option>production</option></Select>
          <UpDown />
        </BranchSelect>
        <NavItems items={[["Overview", icons.dashboard], ["Data API", icons.api], ["Monitoring", icons.monitoring], ["SQL Editor", icons.sql], ["Tables", icons.tables], ["Backup & Restore", icons.backup]]} />
      </Nav>
      <SidebarFoot><NavLink href="#">{icons.collapse}Collapse menu</NavLink></SidebarFoot>
    </SidebarBody>
    <ScrollTrack share={84} />
  </Sidebar>
);

const stats = [
  { label: "Branches", value: "2", limit: "/ 10" },
  { label: "Compute", value: "50.59", limit: "/ 50 hours", over: true },
  { label: "Storage", value: "0.06", limit: "/ 0.5 GB" },
  { label: "Network transfer", value: "0.04", limit: "/ 5 GB" },
];

const Usage = () => (
  <Card>
    <CardHead><CardTitle>Usage since Aug 14, 2025</CardTitle><Link href="#">Upgrade</Link></CardHead>
    <Stats>
      {stats.map((s) => (
        <Stat key={s.label}>
          <StatLabel>{s.label}</StatLabel>
          <StatValue>
            <StatNumber $over={s.over}>{s.value}</StatNumber>
            <span>{s.limit}</span>
            {s.over && <Warn width="16" height="14" viewBox="0 0 16 14" fill="none" stroke={c.danger} strokeWidth="1.200"><path d="M8 1l7 12H1zM8 5v4M8 10.300v1.200" /></Warn>}
          </StatValue>
        </Stat>
      ))}
    </Stats>
    <Note>Metrics may be delayed up to one hour. <Link $light href="#">Learn more here</Link>.</Note>
  </Card>
);

const Monitoring = () => (
  <Card>
    <CardHead><CardTitle>Monitoring</CardTitle><Link href="#">View all metrics</Link></CardHead>
    <Filters>
      <Field>
        <FieldLabel htmlFor="branch">Branch</FieldLabel>
        <SelectBox><Select id="branch"><option>production</option></Select><Pill>DEFAULT</Pill><Spacer /><ChevronDown /></SelectBox>
      </Field>
      <Field>
        <FieldLabel htmlFor="compute">Compute</FieldLabel>
        <SelectBox><Select id="compute"><option>Primary</option></Select><StatusPill><Dot />IDLE</StatusPill><Spacer /><ChevronDown /></SelectBox>
      </Field>
      <FilterDivider />
      <Button><Line w={20} box="-2 -2 20 20" sw={1.500}><path d="M3 4.200a6.300 6.300 0 11-1.200 5M2.500.8v4h4" /></Line>Refresh</Button>
    </Filters>
    <ChartEmpty>There is no data to display at the moment.</ChartEmpty>
  </Card>
);

const branchRows = [
  { name: "production", isDefault: true, min: "1" },
  { name: "development", isDefault: false, min: ".25" },
];

const Branches = () => (
  <Card>
    <CardHead><CardTitle>Branches</CardTitle><Link href="#">View all</Link></CardHead>
    <Table>
      <thead><tr><HeadCell>Name</HeadCell><HeadCell>Primary compute</HeadCell><HeadCell>Created by</HeadCell></tr></thead>
      <tbody>
        {branchRows.map((b) => (
          <tr key={b.name}>
            <Cell><Inline><a href="#">{b.name}</a>{b.isDefault && <Pill>DEFAULT</Pill>}{icons.archive}</Inline></Cell>
            <Cell>
              <Inline>
                <Compute href="#">{b.min}<Line w={20} h={14} box="0 0 20 14" sw={1.600}><path d="M1 7h18M5.500 2L1 7l4.500 5M14.500 2L19 7l-4.500 5" /></Line>2 CU</Compute>
                <StatusPill><Dot />IDLE</StatusPill>
              </Inline>
            </Cell>
            <Cell><Avatar>A</Avatar></Cell>
          </tr>
        ))}
      </tbody>
    </Table>
    <Preview>
      <PreviewHead>
        <Pill $tone="preview">PREVIEW WORKFLOW</Pill>
        <IconButton $size={22} aria-label="Dismiss"><Line w={12} box="0 0 12 12" sw={1.300}><path d="M.5.500l11 11M11.500.500l-11 11" /></Line></IconButton>
      </PreviewHead>
      <p>You don't have any preview branches yet. Improve your workflow by adding database branching to your development previews.</p>
    </Preview>
  </Card>
);

const SystemTaskbar = () => (
  <Taskbar>
    <Weather><WeatherIcon /><Stack><span>27°C</span><Faint>Cloudy</Faint></Stack></Weather>
    <TaskIcons>
      <TaskIcon aria-label="Start"><StartIcon /></TaskIcon>
      <SearchBox>
        <Line w={19} box="0 0 19 19" sw={2}><circle cx="8" cy="8" r="6.800" /><path d="M12.800 12.800l5.500 5.500" /></Line>
        <SearchInput aria-label="Search" placeholder="Search" />
        <MoonIcon />
      </SearchBox>
      {taskApps.map((a) => <TaskIcon key={a.name} aria-label={a.name} $open={a.open} $active={a.active}>{a.icon}</TaskIcon>)}
    </TaskIcons>
    <Tray>
      <TrayIcon aria-label="Show hidden icons"><Line w={14} h={9} box="0 0 14 9" sw={1.800}><path d="M1 8l6-6 6 6" /></Line></TrayIcon>
      <TrayIcon aria-label="OneDrive"><svg width="22" height="16" viewBox="0 0 22 16"><path d="M5 12q-2-8 5-11 6 0 7 5l-4 6z" fill="#aab9cf" /><path d="M4 16a4 4 0 010-8q3-1 5 .5Q13 4 17 7q5 1 4.500 5.500T17 16z" fill="#fff" /></svg></TrayIcon>
      <TrayIcon aria-label="Updates"><svg width="22" height="22" viewBox="0 0 22 22" fill="none" stroke="#fff" strokeWidth="1.500"><path d="M2 9A9 9 0 0118 6M18.500 1v5.500H13M2.500 20v-5.500H8M3 15q2 5 7 5" /><circle cx="16" cy="16" r="5.500" fill="#f00" stroke="none" /></svg></TrayIcon>
      <Language>ENG IN</Language>
      <TrayStatus aria-label="Network, volume and battery">
        <Line sw={1.600}><path d="M1 8q9-8.500 18 0M4 11.200q6-5.500 12 0M7 14.200q3-2.800 6 0" /><circle cx="10" cy="16.800" r="1" fill="currentColor" /></Line>
        <Line sw={1.500}><path d="M1 7.500h3l4.500-4v13l-4.500-4H1zM11.500 7q2 3 0 6M14 4.800q3.500 5.200 0 10.400M16.500 2.800q5 7.200 0 14.400" /></Line>
        <Line sw={1.600}><path d="M8 4h7.500q2 0 2 2v8.500q0 2-2 2H4q-2 0-2-2V9M17.500 8.500h1.700v4" /><path d="M5.500 8h9v6.500h-9z" fill="currentColor" stroke="none" /><path d="M5 0L1.500 6H4L3 10l4-6H4.500z" fill="currentColor" stroke="none" /></Line>
      </TrayStatus>
      <Clock><Stack><span>09:38</span><span>01-09-2025</span></Stack></Clock>
      <IconButton aria-label="Notifications"><svg width="20" height="22" viewBox="0 0 20 22"><path d="M2 14V9q0-7 7-7t7 7v5l2 4H0zM6.500 19h5q-.5 2.500-2.500 2.500T6.500 19z" fill="#fff" /><path d="M6.500 7.500H11L6.500 13H11" stroke="#0b3166" strokeWidth="1.500" fill="none" /><path d="M14 1h4.500L14 5.500h4.500" stroke="#fff" strokeWidth="1.400" fill="none" /></svg></IconButton>
    </Tray>
  </Taskbar>
);

export default function App() {
  return (
    <Screen>
      <Global />
      <Browser />
      <Banner>
        <Pill $tone="limit">LIMIT REACHED</Pill>
        <span>You've used all your compute allowance for this month.</span>
        <StrongLink href="#">Review usage</StrongLink>
        <StrongLink href="#">Upgrade plan</StrongLink>
      </Banner>
      <ConsoleHeader />
      <Workspace>
        <SidePanel />
        <Main>
          <TitleRow>
            <Title>Project Dashboard</Title>
            <Button $primary><Line w={20} sw={1.400}><path d="M1 19l3-3M19 1l-3 3M7 8.500l5.500 5.500-2 2Q7 18.500 4.200 15.800 1.500 13 4.500 10.500zM8 5.500L14.500 12l2-2Q19 7 16 4 13 1.500 10 4zM6.500 12l2-2M9 14l1.500-1.500" /></Line>Connect</Button>
            <Button><Line w={20} sw={1.400}><circle cx="7" cy="5.500" r="4" /><circle cx="15.500" cy="6" r="2.600" /><path d="M.8 17.500q0-6 6.200-6t6.200 6zM14 11.500q5 0 5 5h-3.500" /></Line>Share</Button>
          </TitleRow>
          <Usage />
          <Columns>
            <Monitoring />
            <Branches />
          </Columns>
        </Main>
        <ScrollTrack share={59} />
      </Workspace>
      <SystemTaskbar />
    </Screen>
  );
}
